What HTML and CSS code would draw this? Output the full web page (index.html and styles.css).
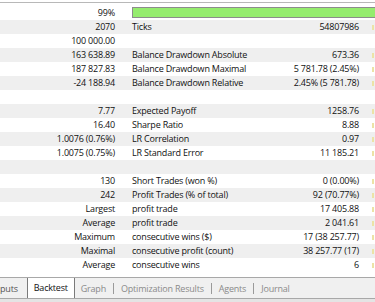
FILE: index.html
```html
<!DOCTYPE html>
<html>
<head>
    <title>Backtest Report</title>
    <link rel="stylesheet" href="styles.css">
</head>
<body>
    <div class="top"></div>
    <div class="report">
        <div class="row"><span class="v1">99%</span><div class="bar"></div></div>
        <div class="row"><span class="v1">2070</span><span class="lbl">Ticks</span><span class="v2">54807986</span></div>
        <div class="row"><span class="v1">100 000.00</span><span class="lbl"></span><span class="v2"></span></div>
        <div class="row"><span class="v1">163 638.89</span><span class="lbl">Balance Drawdown Absolute</span><span class="v2">673.36</span></div>
        <div class="row"><span class="v1">187 827.83</span><span class="lbl">Balance Drawdown Maximal</span><span class="v2">5 781.78 (2.45%)</span></div>
        <div class="row"><span class="v1">-24 188.94</span><span class="lbl">Balance Drawdown Relative</span><span class="v2">2.45% (5 781.78)</span></div>
        <div class="row"></div>
        <div class="row"><span class="v1">7.77</span><span class="lbl">Expected Payoff</span><span class="v2">1258.76</span></div>
        <div class="row"><span class="v1">16.40</span><span class="lbl">Sharpe Ratio</span><span class="v2">8.88</span></div>
        <div class="row"><span class="v1">1.0076 (0.76%)</span><span class="lbl">LR Correlation</span><span class="v2">0.97</span></div>
        <div class="row"><span class="v1">1.0075 (0.75%)</span><span class="lbl">LR Standard Error</span><span class="v2">11 185.21</span></div>
        <div class="row"></div>
        <div class="row"><span class="v1">130</span><span class="lbl">Short Trades (won %)</span><span class="v2">0 (0.00%)</span></div>
        <div class="row"><span class="v1">242</span><span class="lbl">Profit Trades (% of total)</span><span class="v2">92 (70.77%)</span></div>
        <div class="row"><span class="v1">Largest</span><span class="lbl">profit trade</span><span class="v2">17 405.88</span></div>
        <div class="row"><span class="v1">Average</span><span class="lbl">profit trade</span><span class="v2">2 041.61</span></div>
        <div class="row"><span class="v1">Maximum</span><span class="lbl">consecutive wins ($)</span><span class="v2">17 (38 257.77)</span></div>
        <div class="row"><span class="v1">Maximal</span><span class="lbl">consecutive profit (count)</span><span class="v2">38 257.77 (17)</span></div>
        <div class="row"><span class="v1">Average</span><span class="lbl">consecutive wins</span><span class="v2">6</span></div>
    </div>
    <div class="tabs">
        <span class="tab first">puts</span>
        <span class="tab active">Backtest</span>
        <span class="tab">Graph</span>
        <span class="sep"></span>
        <span class="tab">Optimization Results</span>
        <span class="sep"></span>
        <span class="tab">Agents</span>
        <span class="sep"></span>
        <span class="tab">Journal</span>
    </div>
    <div class="foot"></div>
</body>
</html>
```

FILE: styles.css
```css
body {
    margin: 0;
    width: 375px;
    height: 302px;
    overflow: hidden;
    background-color: #fff;
    color: #111;
    font-family: "Open Sans", "Segoe UI", sans-serif;
    font-size: 9px;
    letter-spacing: -0.2px;
}
.top {
    height: 2px;
    border-bottom: 1px solid #b8b8b8;
    margin-bottom: 3px;
}
.report {
    height: 270px;
}
.row {
    display: flex;
    height: 14px;
    line-height: 14px;
    white-space: nowrap;
}
.row:nth-child(even) {
    background-color: #efefef;
}
.v1 {
    flex: none;
    width: 115px;
    text-align: right;
}
.lbl {
    flex: 1;
    margin-left: 17px;
}
.v2 {
    flex: none;
    width: 110px;
    margin-right: 17px;
    text-align: right;
}
/* edge of the next column, cut off by the window */
.row:has(.v2:not(:empty))::after {
    content: "";
    flex: none;
    width: 2px;
    height: 5px;
    margin: 5px 1px 0 -4px;
    background-color: #ece3a6;
}
.bar {
    flex: 1;
    align-self: flex-start;
    margin-top: 1px;
    margin-left: 17px;
    height: 9px;
    border: 1px solid #8c8c8c;
    border-right: none;
    background-color: #95ec6e;
}
.tabs {
    display: flex;
    align-items: center;
    height: 20px;
    margin-top: 1px;
    border-top: 1px solid #a8a8a8;
    border-bottom: 1px solid #a8a8a8;
    background-color: #f0f0f0;
}
.tab {
    padding: 0 6px;
    color: #8a8a8a;
}
.tab.first {
    padding: 0 9px 0 0;
    color: #555;
}
.tab.active {
    align-self: stretch;
    line-height: 20px;
    background-color: #fff;
    border-left: 1px solid #7a7a7a;
    border-right: 1px solid #7a7a7a;
    color: #111;
}
.sep {
    width: 1px;
    height: 11px;
    margin: 0 1px;
    background-color: #9a9a9a;
}
.foot {
    height: 10px;
    background-color: #e4e4e4;
}
```
